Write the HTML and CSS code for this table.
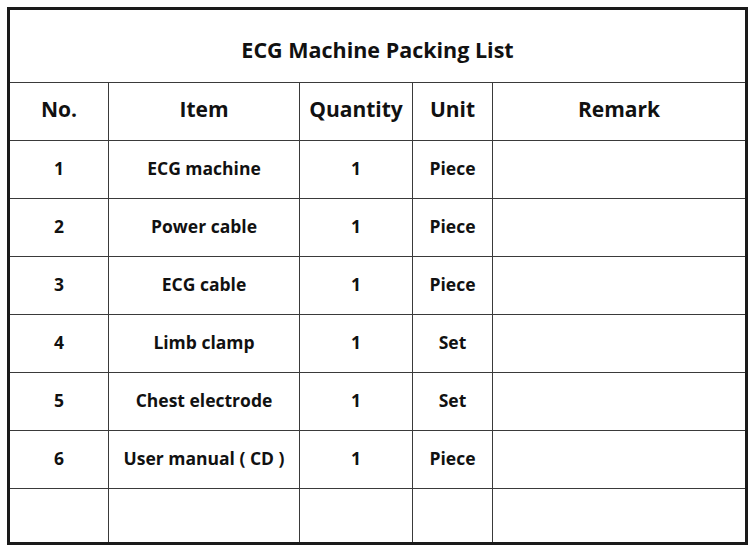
FILE: index.html
```html
<!DOCTYPE html>
<html>
<head>
<meta charset="utf-8">
<link rel="stylesheet" href="styles.css">
</head>
<body>
<div class="page">
<table class="packing">
  <colgroup>
    <col class="c-no"><col class="c-item"><col class="c-qty"><col class="c-unit"><col class="c-remark">
  </colgroup>
  <thead>
    <tr class="title-row"><th colspan="5" class="title">ECG Machine Packing List</th></tr>
    <tr class="head-row"><th>No.</th><th>Item</th><th>Quantity</th><th>Unit</th><th>Remark</th></tr>
  </thead>
  <tbody>
    <tr><td>1</td><td>ECG machine</td><td>1</td><td>Piece</td><td></td></tr>
    <tr><td>2</td><td>Power cable</td><td>1</td><td>Piece</td><td></td></tr>
    <tr><td>3</td><td>ECG cable</td><td>1</td><td>Piece</td><td></td></tr>
    <tr><td>4</td><td>Limb clamp</td><td>1</td><td>Set</td><td></td></tr>
    <tr><td>5</td><td>Chest electrode</td><td>1</td><td>Set</td><td></td></tr>
    <tr><td>6</td><td>User manual ( CD )</td><td>1</td><td>Piece</td><td></td></tr>
    <tr class="last"><td></td><td></td><td></td><td></td><td></td></tr>
  </tbody>
</table>
</div>
</body>
</html>
```
FILE: styles.css
```css
html, body {
  margin: 0;
  padding: 0;
  background: #ffffff;
}
.page {
  padding: 7px 0 0 7px;
}
.packing {
  border-collapse: collapse;
  table-layout: fixed;
  width: 738px;
  border: 3px solid #1a1a1a;
  font-family: "Open Sans", "Liberation Sans", sans-serif;
  font-weight: 700;
  color: #111;
}
.c-no { width: 100px; }
.c-item { width: 191px; }
.c-qty { width: 113px; }
.c-unit { width: 80px; }
.c-remark { width: 254px; }
.packing th, .packing td {
  border: 1px solid #3a3a3a;
  text-align: center;
  vertical-align: middle;
  padding: 0;
  box-sizing: border-box;
}
.title-row th {
  height: 74px;
  font-size: 21.5px;
  padding-top: 6px;
}
.head-row th {
  height: 58px;
  font-size: 21px;
  padding-bottom: 5px;
}
.packing td {
  height: 58px;
  font-size: 17.5px;
  padding-bottom: 4px;
}
.packing tr.last td {
  height: 55px;
}
```
